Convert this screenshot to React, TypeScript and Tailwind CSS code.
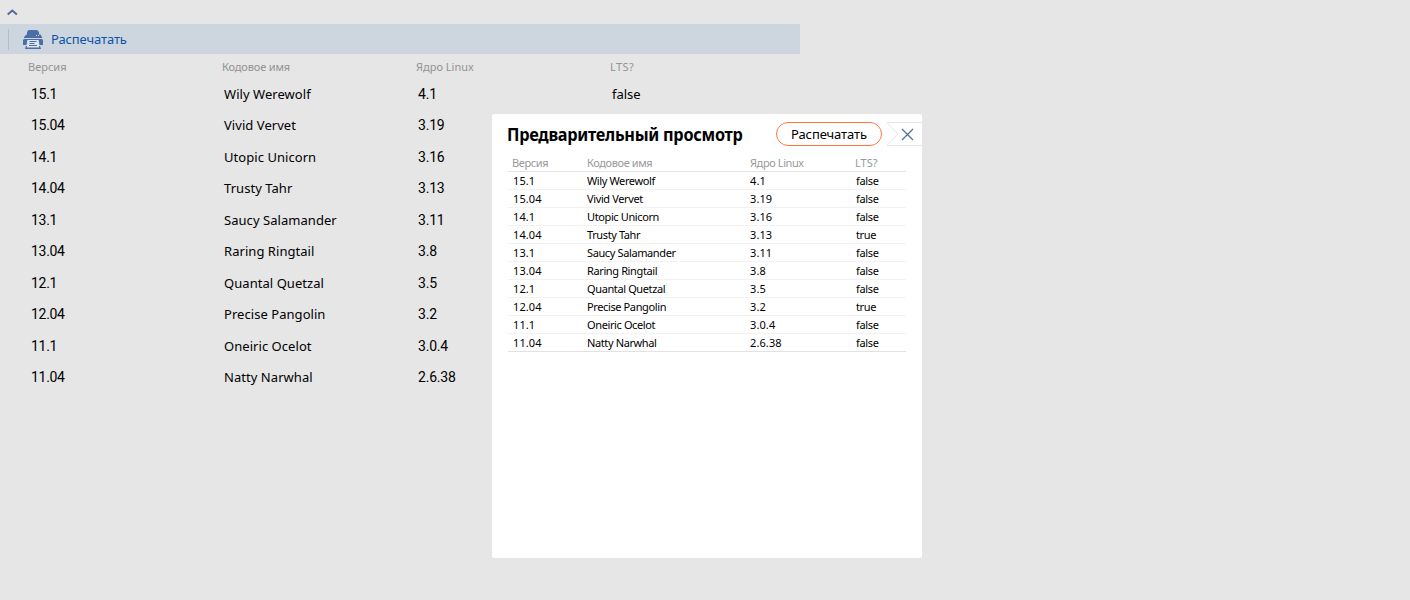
type Release = { version: string; name: string; kernel: string; lts: string };

const releases: Release[] = [
  { version: "15.1", name: "Wily Werewolf", kernel: "4.1", lts: "false" },
  { version: "15.04", name: "Vivid Vervet", kernel: "3.19", lts: "false" },
  { version: "14.1", name: "Utopic Unicorn", kernel: "3.16", lts: "false" },
  { version: "14.04", name: "Trusty Tahr", kernel: "3.13", lts: "true" },
  { version: "13.1", name: "Saucy Salamander", kernel: "3.11", lts: "false" },
  { version: "13.04", name: "Raring Ringtail", kernel: "3.8", lts: "false" },
  { version: "12.1", name: "Quantal Quetzal", kernel: "3.5", lts: "false" },
  { version: "12.04", name: "Precise Pangolin", kernel: "3.2", lts: "true" },
  { version: "11.1", name: "Oneiric Ocelot", kernel: "3.0.4", lts: "false" },
  { version: "11.04", name: "Natty Narwhal", kernel: "2.6.38", lts: "false" },
];

function PrinterIcon() {
  return (
    <svg width="20" height="19" viewBox="0 0 20 19" fill="#4b6ea9">
      <path d="M5.500 0h8.500l2 2v2.500h1.500L19 7v1H1V7l2.500-2.500H4V2z" />
      <path d="M13 5h1v1h-1zM15 5h1v1h-1z" fill="#cdd5de" />
      <path d="M1 9h18l1 1v5h-3.500l-0.800-5H4.300l-0.800 5H0v-5z" />
      <path d="M5 10h10l1.200 7.500H3.800z" fill="#dfe6ee" />
      <path d="M2 19l1-3h1l-0.200 1.500h12.400L16 16h1l1 3z" />
      <path d="M6.500 11.500h7M6.500 13.500h5M6 15.500h8" stroke="#4b6ea9" strokeWidth="1" />
    </svg>
  );
}

function Background() {
  return (
    <div className="w-[800px] font-['Noto_Sans',sans-serif]">
      <div className="flex h-6 items-center pl-[7px]">
        <svg width="11" height="7" viewBox="0 0 11 7" fill="none">
          <path d="M0.700 5.500L5.300 1.500L9.900 5.500" stroke="#53699e" strokeWidth="2" />
        </svg>
      </div>
      <div className="flex h-[30px] items-center bg-[#cdd5de] pl-2">
        <div className="h-[21px] w-px bg-[#b5bcc4]" />
        <div className="ml-[14px]"><PrinterIcon /></div>
        <span className="ml-2 pt-0.5 text-[13px] tracking-[-0.12px] text-[#0b55aa]">Распечатать</span>
      </div>
      <div className="grid h-[24.7px] grid-cols-[194px_194px_194px_1fr] items-center pl-7 pt-px text-[11px] text-[#939393]">
        <span>Версия</span>
        <span className="tracking-[-0.15px]">Кодовое имя</span>
        <span>Ядро Linux</span>
        <span className="tracking-[0.4px]">LTS?</span>
      </div>
      {releases.map((r, i) => (
        <div
          key={r.version}
          className="grid h-[31.5px] grid-cols-[193px_194px_194px_1fr] items-center pl-[31px] text-[13px] text-black"
        >
          <span className="font-[Roboto,sans-serif] text-[14px] tracking-[-0.3px]">{r.version}</span>
          <span className="tracking-[0.05px]">{r.name}</span>
          <span className="font-[Roboto,sans-serif] text-[14px] tracking-[-0.2px]">{r.kernel}</span>
          {i === 0 && <span>{r.lts}</span>}
        </div>
      ))}
    </div>
  );
}

function Preview() {
  return (
    <div className="absolute left-[492px] top-[114px] h-[444px] w-[430px] rounded-[2px] bg-white pt-2 font-['Noto_Sans',sans-serif]">
      <div className="flex h-6 items-center pl-[14.5px]">
        <div className="w-[269.5px]">
          <h1 className="origin-left scale-x-[0.905] whitespace-nowrap text-[18px] font-bold tracking-[-0.3px] text-black">
            Предварительный просмотр
          </h1>
        </div>
        <button className="h-6 w-[106px] shrink-0 rounded-full border border-[#ff7640] text-[13px] leading-none tracking-[-0.12px] text-black">
          Распечатать
        </button>
        <svg className="ml-1 shrink-0" width="36" height="24" viewBox="0 0 36 24" fill="none">
          <path d="M36 0.500H1L12 12L1 23.500H36" stroke="#e6e6e6" />
          <path d="M16 7L27 18M27 7L16 18" stroke="#4f71a8" strokeWidth="1.300" />
        </svg>
      </div>
      <div className="ml-4 mt-2 w-[398px] text-[11px] leading-4">
        <div className="grid h-[18px] grid-cols-[75px_163px_105px_1fr] items-start border-b border-[#e2e2e2] pl-1 pt-px tracking-[-0.4px] text-[#999]">
          <span>Версия</span>
          <span>Кодовое имя</span>
          <span>Ядро Linux</span>
          <span className="tracking-[0px]">LTS?</span>
        </div>
        {releases.map((r) => (
          <div
            key={r.version}
            className="grid h-[18px] grid-cols-[74px_163px_106px_1fr] items-start border-b border-[#f2f2f2] pl-[5px] pt-px text-black last:border-[#e2e2e2]"
          >
            <span className="tracking-[0.1px]">{r.version}</span>
            <span className="tracking-[-0.38px]">{r.name}</span>
            <span className="tracking-[0.1px]">{r.kernel}</span>
            <span className="tracking-[-0.35px]">{r.lts}</span>
          </div>
        ))}
      </div>
    </div>
  );
}

export default function App() {
  return (
    <div className="relative h-[600px] w-[1410px] overflow-hidden bg-[#e6e6e6]">
      <Background />
      <Preview />
    </div>
  );
}
